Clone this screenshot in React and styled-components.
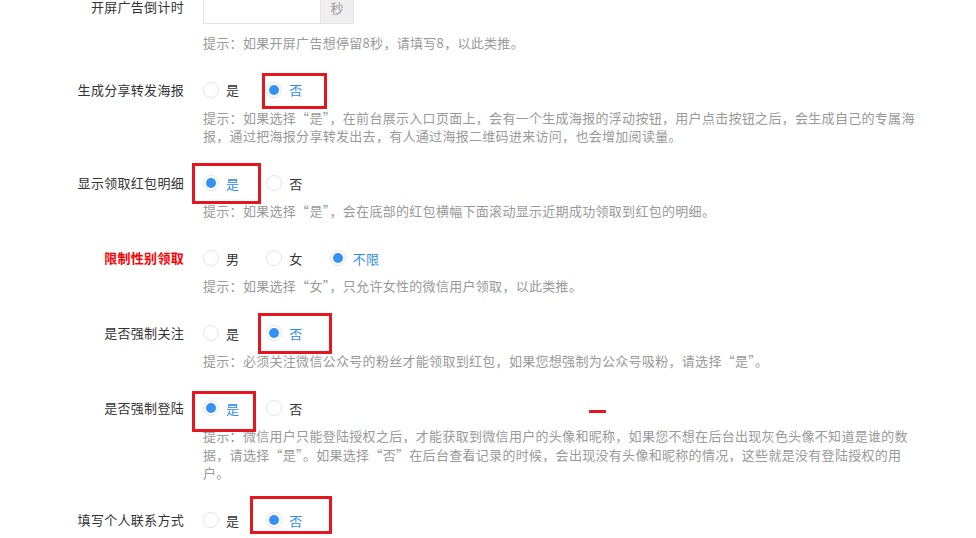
import React from 'react'
import styled, { createGlobalStyle } from 'styled-components'

const GlobalStyle = createGlobalStyle`
  html, body {
    margin: 0;
    padding: 0;
    background: #fff;
    font-family: "Noto Sans CJK SC", "Liberation Sans", sans-serif;
    overflow: hidden;
  }
`

const Form = styled.div`
  margin-top: -10px;
  width: 976px;
`

const Group = styled.div`
  position: relative;
  display: flex;
  margin-bottom: 20.5px;
`

const Label = styled.div`
  width: 184px;
  flex-shrink: 0;
  text-align: right;
  font-size: 13px;
  letter-spacing: 0.3px;
  line-height: 34px;
  height: 34px;
  color: ${({ danger }) => (danger ? '#f00' : '#333')};
  font-weight: ${({ danger }) => (danger ? 'bold' : 'normal')};
  white-space: nowrap;
  margin-right: 19px;
`

const Body = styled.div`
  display: flex;
  flex-direction: column;
  width: 724px;
`

const Controls = styled.div`
  display: flex;
  align-items: center;
  height: 34px;
`

const Hint = styled.div`
  margin-top: ${({ spaced }) => (spaced ? '9.75px' : '2px')};
  font-size: 13px;
  letter-spacing: 0.3px;
  line-height: 18.5px;
  color: #999;
`

const InputGroup = styled.div`
  display: flex;
  height: 34px;
`

const Input = styled.input`
  box-sizing: border-box;
  width: 117px;
  height: 34px;
  border: 1px solid #e5e5e5;
  border-right: none;
  outline: none;
  padding: 0 8px;
  font-size: 13px;
`

const Addon = styled.span`
  box-sizing: border-box;
  width: 34px;
  height: 34px;
  display: flex;
  align-items: center;
  justify-content: center;
  background: #eee;
  border: 1px solid #e5e5e5;
  color: #999;
  font-size: 13px;
`

const Option = styled.label`
  position: relative;
  display: inline-flex;
  align-items: center;
  height: 34px;
  margin-right: 27px;
  font-size: 13px;
  letter-spacing: 0.3px;
  color: ${({ checked }) => (checked ? '#2d8cf0' : '#333')};
  cursor: pointer;
`

const Circle = styled.span`
  box-sizing: border-box;
  width: 16px;
  height: 16px;
  border-radius: 50%;
  border: 1px solid #e3e5e8;
  background: #fff;
  display: flex;
  align-items: center;
  justify-content: center;
  margin-right: 7px;

  &::after {
    content: '';
    width: 10px;
    height: 10px;
    border-radius: 50%;
    background: #3592f2;
    display: ${({ checked }) => (checked ? 'block' : 'none')};
  }
`

// hand drawn red annotation frames over the screenshot
const Mark = styled.span`
  position: absolute;
  box-sizing: border-box;
  border: 3px solid #e5161f;
  pointer-events: none;
`

const Dash = styled.span`
  position: absolute;
  left: 589px;
  top: 19px;
  width: 17px;
  height: 3px;
  background: #e5161f;
`

const rows = [
  {
    label: '生成分享转发海报',
    options: ['是', '否'],
    value: 1,
    mark: { index: 1, left: -4, top: 0, width: 65, height: 36 },
    hint: '提示：如果选择“是”，在前台展示入口页面上，会有一个生成海报的浮动按钮，用户点击按钮之后，会生成自己的专属海报，通过把海报分享转发出去，有人通过海报二维码进来访问，也会增加阅读量。',
  },
  {
    label: '显示领取红包明细',
    options: ['是', '否'],
    value: 0,
    mark: { index: 0, left: -11, top: -3, width: 69, height: 41 },
    hint: '提示：如果选择“是”，会在底部的红包横幅下面滚动显示近期成功领取到红包的明细。',
  },
  {
    label: '限制性别领取',
    danger: true,
    options: ['男', '女', '不限'],
    value: 2,
    hint: '提示：如果选择“女”，只允许女性的微信用户领取，以此类推。',
  },
  {
    label: '是否强制关注',
    options: ['是', '否'],
    value: 1,
    mark: { index: 1, left: -8, top: -3, width: 74, height: 41 },
    hint: '提示：必须关注微信公众号的粉丝才能领取到红包，如果您想强制为公众号吸粉，请选择“是”。',
  },
  {
    label: '是否强制登陆',
    options: ['是', '否'],
    value: 0,
    dash: true,
    mark: { index: 0, left: -11, top: 0, width: 64, height: 41 },
    hint: '提示：微信用户只能登陆授权之后，才能获取到微信用户的头像和昵称，如果您不想在后台出现灰色头像不知道是谁的数据，请选择“是”。如果选择“否”在后台查看记录的时候，会出现没有头像和昵称的情况，这些就是没有登陆授权的用户。',
  },
  {
    label: '填写个人联系方式',
    options: ['是', '否'],
    value: 1,
    mark: { index: 1, left: -16, top: -7, width: 82, height: 38 },
  },
]

const RadioRow = ({ row }) => (
  <Group>
    <Label danger={row.danger}>{row.label}</Label>
    <Body>
      <Controls>
        {row.options.map((opt, i) => (
          <Option key={i} checked={row.value === i}>
            <Circle checked={row.value === i} />
            {opt}
            {row.mark && row.mark.index === i && (
              <Mark
                style={{
                  left: row.mark.left,
                  top: row.mark.top,
                  width: row.mark.width,
                  height: row.mark.height,
                }}
              />
            )}
          </Option>
        ))}
      </Controls>
      {row.hint && <Hint>{row.hint}</Hint>}
    </Body>
    {row.dash && <Dash />}
  </Group>
)

export default function App() {
  return (
    <>
      <GlobalStyle />
      <Form>
        <Group>
          <Label>开屏广告倒计时</Label>
          <Body>
            <InputGroup>
              <Input type="text" />
              <Addon>秒</Addon>
            </InputGroup>
            <Hint spaced>提示：如果开屏广告想停留8秒，请填写8，以此类推。</Hint>
          </Body>
        </Group>
        {rows.map((row, i) => (
          <RadioRow key={i} row={row} />
        ))}
      </Form>
    </>
  )
}
